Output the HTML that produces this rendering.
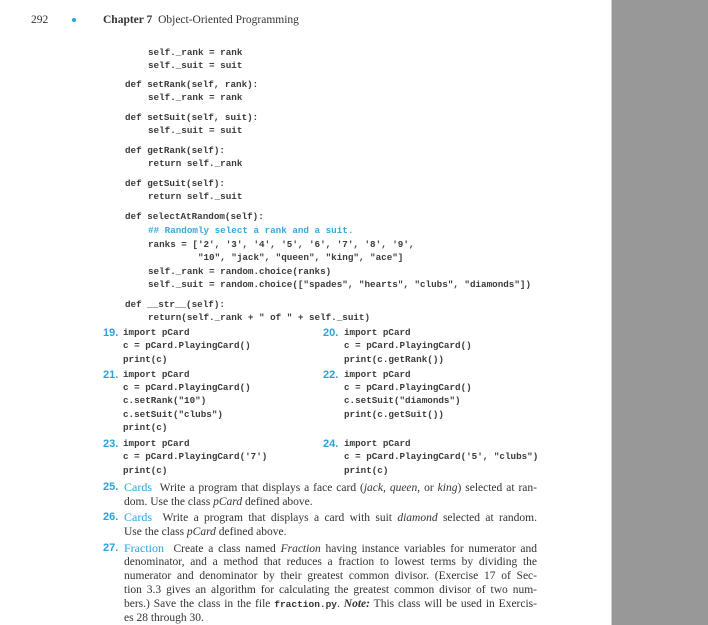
<!DOCTYPE html>
<html><head><meta charset="utf-8"><style>
html,body{margin:0;padding:0}
body{width:708px;height:625px;background:#fff;position:relative;overflow:hidden}
.side{position:absolute;left:611px;top:0;width:97px;height:625px;background:#989898;border-left:1px solid #cfcfcf}
.c{position:absolute;font-family:"Liberation Mono",monospace;font-size:9.25px;font-weight:bold;color:#3a3a3a;line-height:12px;white-space:pre}
.cm{color:#3aa6dc}
.n{position:absolute;font-family:"Liberation Sans",sans-serif;font-size:11px;font-weight:bold;color:#29a3dc;line-height:12px}
.t{position:absolute;left:124px;width:413px;font-family:"Liberation Serif",serif;font-size:11.5px;color:#333;line-height:12px;white-space:nowrap;text-align:justify;text-align-last:justify}
.t.l{text-align-last:left}
.h{position:absolute;font-family:"Liberation Serif",serif;font-size:11.5px;color:#333;line-height:12px;top:14px}
.b{color:#29a3dc;font-size:12px}
.mono{font-family:"Liberation Mono",monospace;font-weight:bold;font-size:9.5px}
</style></head><body>
<div class="side"></div>
<div class="h" style="left:31px">292</div>
<div style="position:absolute;left:72px;top:18px;width:4px;height:4px;border-radius:50%;background:#29a3dc"></div>
<div class="h" style="left:103px"><span style="font-weight:bold">Chapter 7</span>&nbsp; Object-Oriented Programming</div>

<div class="c" style="left:148px;top:47px">self._rank = rank</div>
<div class="c" style="left:148px;top:60px">self._suit = suit</div>
<div class="c" style="left:125px;top:79px">def setRank(self, rank):</div>
<div class="c" style="left:148px;top:92px">self._rank = rank</div>
<div class="c" style="left:125px;top:112px">def setSuit(self, suit):</div>
<div class="c" style="left:148px;top:125px">self._suit = suit</div>
<div class="c" style="left:125px;top:145px">def getRank(self):</div>
<div class="c" style="left:148px;top:158px">return self._rank</div>
<div class="c" style="left:125px;top:178px">def getSuit(self):</div>
<div class="c" style="left:148px;top:191px">return self._suit</div>
<div class="c" style="left:125px;top:211px">def selectAtRandom(self):</div>
<div class="c cm" style="left:148px;top:225px">## Randomly select a rank and a suit.</div>
<div class="c" style="left:148px;top:239px">ranks = ['2', '3', '4', '5', '6', '7', '8', '9',</div>
<div class="c" style="left:148px;top:252px">         "10", "jack", "queen", "king", "ace"]</div>
<div class="c" style="left:148px;top:266px">self._rank = random.choice(ranks)</div>
<div class="c" style="left:148px;top:279px">self._suit = random.choice(["spades", "hearts", "clubs", "diamonds"])</div>
<div class="c" style="left:125px;top:299px">def __str__(self):</div>
<div class="c" style="left:148px;top:312px">return(self._rank + " of " + self._suit)</div>

<div class="n" style="left:103px;top:327px">19.</div>
<div class="c" style="left:123px;top:327px">import pCard</div>
<div class="c" style="left:123px;top:340px">c = pCard.PlayingCard()</div>
<div class="c" style="left:123px;top:354px">print(c)</div>
<div class="n" style="left:323px;top:327px">20.</div>
<div class="c" style="left:344px;top:327px">import pCard</div>
<div class="c" style="left:344px;top:340px">c = pCard.PlayingCard()</div>
<div class="c" style="left:344px;top:354px">print(c.getRank())</div>

<div class="n" style="left:103px;top:369px">21.</div>
<div class="c" style="left:123px;top:369px">import pCard</div>
<div class="c" style="left:123px;top:382px">c = pCard.PlayingCard()</div>
<div class="c" style="left:123px;top:395px">c.setRank("10")</div>
<div class="c" style="left:123px;top:409px">c.setSuit("clubs")</div>
<div class="c" style="left:123px;top:422px">print(c)</div>
<div class="n" style="left:323px;top:369px">22.</div>
<div class="c" style="left:344px;top:369px">import pCard</div>
<div class="c" style="left:344px;top:382px">c = pCard.PlayingCard()</div>
<div class="c" style="left:344px;top:395px">c.setSuit("diamonds")</div>
<div class="c" style="left:344px;top:409px">print(c.getSuit())</div>

<div class="n" style="left:103px;top:438px">23.</div>
<div class="c" style="left:123px;top:438px">import pCard</div>
<div class="c" style="left:123px;top:451px">c = pCard.PlayingCard('7')</div>
<div class="c" style="left:123px;top:465px">print(c)</div>
<div class="n" style="left:323px;top:438px">24.</div>
<div class="c" style="left:344px;top:438px">import pCard</div>
<div class="c" style="left:344px;top:451px">c = pCard.PlayingCard('5', "clubs")</div>
<div class="c" style="left:344px;top:465px">print(c)</div>

<div class="n" style="left:103px;top:481px">25.</div>
<div class="t" style="top:481px"><span class="b">Cards</span>&nbsp; Write a program that displays a face card (<i>jack</i>, <i>queen</i>, or <i>king</i>) selected at ran-</div>
<div class="t l" style="top:496px">dom. Use the class <i>pCard</i> defined above.</div>
<div class="n" style="left:103px;top:511px">26.</div>
<div class="t" style="top:511px"><span class="b">Cards</span>&nbsp; Write a program that displays a card with suit <i>diamond</i> selected at random.</div>
<div class="t l" style="top:526px">Use the class <i>pCard</i> defined above.</div>
<div class="n" style="left:103px;top:542px">27.</div>
<div class="t" style="top:542px"><span class="b">Fraction</span>&nbsp; Create a class named <i>Fraction</i> having instance variables for numerator and</div>
<div class="t" style="top:556px">denominator, and a method that reduces a fraction to lowest terms by dividing the</div>
<div class="t" style="top:570px">numerator and denominator by their greatest common divisor. (Exercise 17 of Sec-</div>
<div class="t" style="top:584px">tion 3.3 gives an algorithm for calculating the greatest common divisor of two num-</div>
<div class="t" style="top:598px">bers.) Save the class in the file <span class="mono">fraction.py</span>. <b><i>Note:</i></b> This class will be used in Exercis-</div>
<div class="t l" style="top:612px">es 28 through 30.</div>
</body></html>
